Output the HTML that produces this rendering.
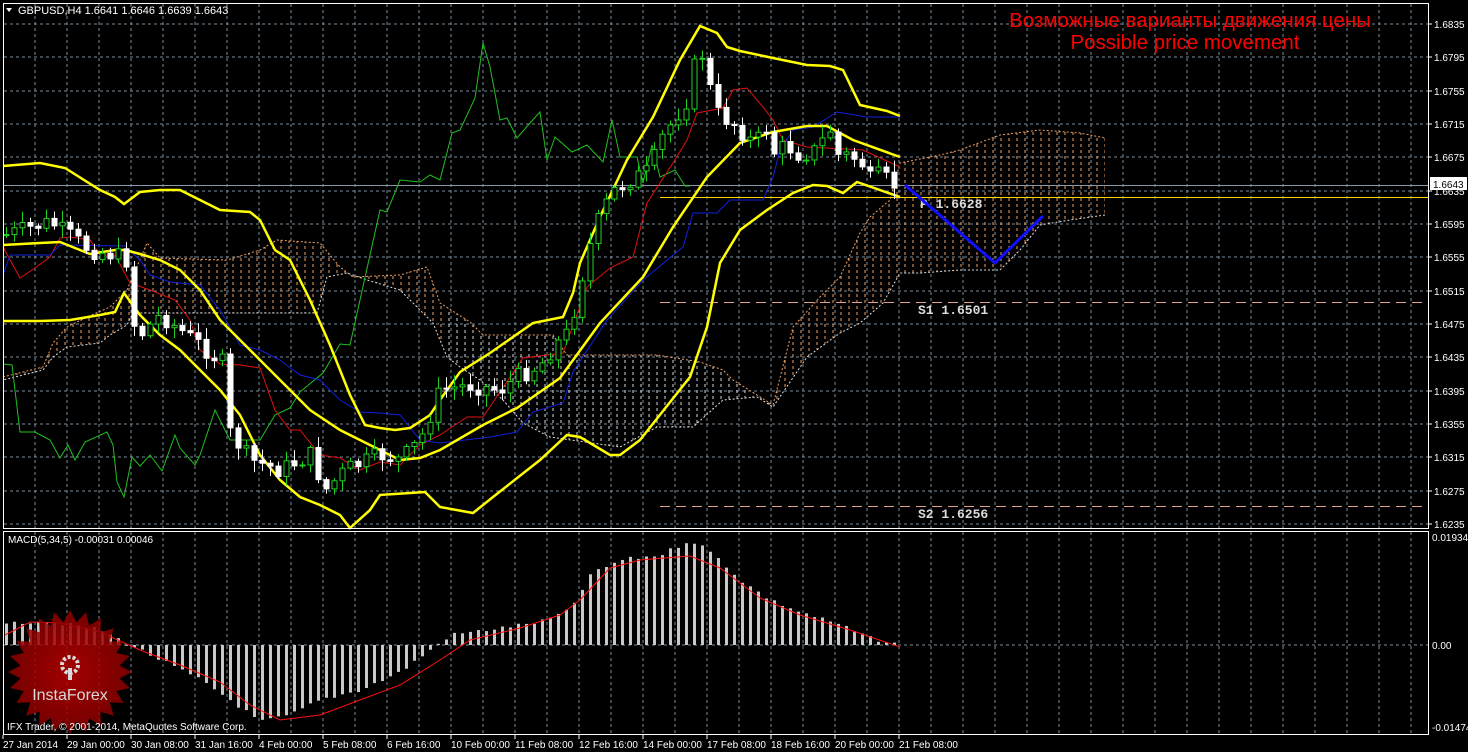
<!DOCTYPE html>
<html><head><meta charset="utf-8">
<style>
html,body{margin:0;padding:0;background:#000;overflow:hidden}
svg{display:block}
text{font-family:"Liberation Sans",Arial,sans-serif}
</style></head>
<body>
<svg id="c" width="1468" height="752" viewBox="0 0 1468 752" xmlns="http://www.w3.org/2000/svg">
<defs>
<pattern id="pw" width="8" height="6" patternUnits="userSpaceOnUse"><line x1="1" y1="0" x2="1" y2="3" stroke="#d8d8d8" stroke-width="1"/></pattern>
<pattern id="po" width="8" height="6" patternUnits="userSpaceOnUse"><line x1="1" y1="0" x2="1" y2="3" stroke="#f0a060" stroke-width="1"/></pattern>
<radialGradient id="rg" cx="50%" cy="50%" r="50%"><stop offset="0" stop-color="#c00000"/><stop offset="1" stop-color="#8a0000"/></radialGradient>
</defs>
<rect width="1468" height="752" fill="#000"/>
<g id="grid" stroke="#7a8a9a" stroke-width="1" stroke-dasharray="3,3"></g>
<g id="cloud"></g>
<g id="lines" fill="none"></g>
<g id="candles"></g>
<g id="macd"></g>
<rect x="3.5" y="3.5" width="1425" height="525" fill="none" stroke="#fff"/>
<rect x="3.5" y="531.5" width="1425" height="203" fill="none" stroke="#fff"/>
<g id="axis" fill="#fff" font-size="10"></g>
<text x="18" y="14" fill="#fff" font-size="11">GBPUSD,H4  1.6641 1.6646 1.6639 1.6643</text>
<polygon points="6,8 12,8 9,12" fill="#fff"/>
<text x="1190" y="27" fill="#ff0000" font-size="20.5" text-anchor="middle">Возможные варианты движения цены</text>
<text x="1185" y="49" fill="#ff0000" font-size="20.5" text-anchor="middle">Possible price movement</text>
<text x="8" y="543" fill="#fff" font-size="10">MACD(5,34,5) -0.00031 0.00046</text>
<g opacity="0.85">
<polygon id="star" fill="url(#rg)"/>
<circle cx="70" cy="665" r="8" fill="none" stroke="#fff" stroke-width="4" stroke-dasharray="3,2"/>
<rect x="68" y="668" width="4" height="12" fill="#fff"/>
<text x="70" y="700" fill="#fff" font-size="16" text-anchor="middle">InstaForex</text>
</g>
<text x="7" y="730" fill="#fff" font-size="10">IFX Trader, © 2001-2014, MetaQuotes Software Corp.</text>
</svg>
<script>
(function(){
var NS="http://www.w3.org/2000/svg";
function el(t,a,p){var e=document.createElementNS(NS,t);for(var k in a)e.setAttribute(k,a[k]);(p||document.getElementById('c')).appendChild(e);return e;}
function G(id){return document.getElementById(id);}
function pts(a){return a.map(function(p){return p[0]+","+p[1]}).join(" ");}
function interp(a,x){if(x<=a[0][0])return a[0][1];for(var i=0;i<a.length-1;i++){if(x>=a[i][0]&&x<=a[i+1][0]){var t=(x-a[i][0])/(a[i+1][0]-a[i][0]);return a[i][1]+t*(a[i+1][1]-a[i][1]);}}return a[a.length-1][1];}
var g=G('grid');
for(var x=35;x<1428;x+=32){el('line',{x1:x,y1:4,x2:x,y2:528},g);el('line',{x1:x,y1:532,x2:x,y2:734},g);}
for(var i=0;i<16;i++){var y=Math.round(24+i*33.33);el('line',{x1:4,y1:y,x2:1428,y2:y},g);}
el('line',{x1:4,y1:645,x2:1428,y2:645},g);
var ax=G('axis');var prices=["1.6835","1.6795","1.6755","1.6715","1.6675","1.6635","1.6595","1.6555","1.6515","1.6475","1.6435","1.6395","1.6355","1.6315","1.6275","1.6235"];
for(var i=0;i<16;i++){var y=Math.round(24+i*33.33);el('line',{x1:1428,y1:y,x2:1432,y2:y,stroke:'#fff'},ax);var t=el('text',{x:1434,y:y+4},ax);t.textContent=prices[i];}
[[541,"0.01934"],[649,"0.00"],[731,"-0.01474"]].forEach(function(a){var t=el('text',{x:1432,y:a[0]},ax);t.textContent=a[1];});
el('rect',{x:1430,y:177,width:37,height:13,fill:'#fff'},ax);
var t=el('text',{x:1433,y:188,fill:'#000'},ax);t.textContent="1.6643";
var dates=["27 Jan 2014","29 Jan 00:00","30 Jan 08:00","31 Jan 16:00","4 Feb 00:00","5 Feb 08:00","6 Feb 16:00","10 Feb 00:00","11 Feb 08:00","12 Feb 16:00","14 Feb 00:00","17 Feb 08:00","18 Feb 16:00","20 Feb 00:00","21 Feb 08:00"];
dates.forEach(function(d,i){var x=3+i*64;el('line',{x1:x,y1:735,x2:x,y2:739,stroke:'#fff'},ax);var t=el('text',{x:x,y:748},ax);t.textContent=d;});
var up=[[3,377],[43,367],[53,343],[67,327],[87,317],[110,307],[127,290],[147,243],[160,258],[227,260],[260,250],[277,240],[320,243],[340,267],[353,277],[400,275],[427,267],[440,303],[470,322],[483,335],[553,335],[567,355],[657,355],[700,362],[723,370],[733,380],[773,405],[793,327],[820,297],[840,277],[860,233],[870,217],[890,200],[900,163],[940,155],[960,150],[1000,135],[1040,130],[1080,133],[1105,138]];
var lo=[[1105,215],[1070,220],[1040,225],[1020,250],[1000,270],[960,270],[920,273],[900,273],[883,303],[860,323],[840,333],[807,357],[773,407],[757,397],[723,400],[693,427],[657,427],[620,447],[550,437],[523,423],[503,400],[480,380],[460,367],[447,357],[433,323],[413,303],[400,290],[367,280],[347,273],[327,277],[317,313],[133,313],[127,325],[110,335],[100,343],[67,347],[53,357],[43,370],[3,380]];
var cl=G('cloud');
var cp=el('clipPath',{id:'cc'},cl);el('polygon',{points:pts(up.concat(lo))},cp);
el('rect',{x:3,y:100,width:440,height:350,fill:'url(#po)','clip-path':'url(#cc)'},cl);
el('rect',{x:443,y:100,width:330,height:400,fill:'url(#pw)','clip-path':'url(#cc)'},cl);
el('rect',{x:773,y:100,width:340,height:350,fill:'url(#po)','clip-path':'url(#cc)'},cl);
el('polyline',{points:pts(up),fill:'none',stroke:'#f0a060','stroke-dasharray':'2,2'},cl);
el('polyline',{points:pts(lo),fill:'none',stroke:'#ddd','stroke-dasharray':'2,2'},cl);
var L=G('lines');
el('line',{x1:4,y1:185.5,x2:1428,y2:185.5,stroke:'#8899aa'},L);
el('line',{x1:660,y1:197.5,x2:1428,y2:197.5,stroke:'#ffd700'},L);
el('line',{x1:660,y1:302.5,x2:1422,y2:302.5,stroke:'#e0a090','stroke-dasharray':'10,6'},L);
el('line',{x1:660,y1:506.5,x2:1422,y2:506.5,stroke:'#e0a090','stroke-dasharray':'10,6'},L);
[["P  1.6628",920,208],["S1 1.6501",918,314],["S2 1.6256",918,518]].forEach(function(a){var t=el('text',{x:a[1],y:a[2],fill:'#ddd',style:'font-family:"Liberation Mono",monospace;font-size:13px;font-weight:bold'},L);t.textContent=a[0];});
el('polyline',{points:"905,185 995,263 1043,216",stroke:'#1010ff','stroke-width':3},L);
var green=[[3,364],[12,365],[20,432],[35,432],[50,440],[60,458],[68,445],[75,460],[85,442],[107,432],[113,445],[117,482],[124,497],[132,457],[140,466],[150,455],[162,471],[175,435],[180,448],[195,465],[200,455],[215,410],[230,440],[260,440],[275,415],[290,408],[300,392],[323,373],[340,344],[350,345],[360,300],[380,210],[387,212],[400,180],[420,182],[430,175],[440,180],[452,133],[460,130],[475,98],[483,43],[490,67],[500,120],[507,118],[517,138],[530,123],[540,112],[547,160],[555,137],[572,152],[587,145],[603,162],[612,120],[620,157],[637,157],[643,183],[652,145],[660,177],[675,170],[685,186],[690,186]];
el('polyline',{points:pts(green),stroke:'#20c020'},L);
var red=[[3,247],[20,278],[35,268],[50,257],[60,238],[70,237],[90,240],[100,255],[115,255],[130,283],[150,290],[175,300],[190,320],[200,350],[220,364],[240,365],[260,368],[275,410],[290,430],[300,430],[320,455],[340,458],[360,470],[380,462],[400,465],[420,445],[440,435],[467,417],[483,417],[523,358],[563,353],[587,287],[610,268],[633,257],[647,203],[673,163],[687,140],[697,113],[723,108],[733,90],[747,88],[763,107],[773,120],[783,140],[807,147],[863,150],[900,167]];
el('polyline',{points:pts(red),stroke:'#e01010'},L);
var blue=[[3,275],[10,255],[50,255],[60,245],[125,246],[140,260],[150,275],[170,282],[200,285],[220,310],[240,345],[260,350],[280,360],[300,375],[320,380],[340,400],[360,412],[380,413],[400,415],[420,440],[440,443],[490,437],[517,432],[533,412],[563,403],[573,372],[607,320],[643,280],[683,247],[693,213],[717,213],[730,200],[763,200],[773,177],[780,150],[793,130],[813,127],[837,112],[867,117],[900,117]];
el('polyline',{points:pts(blue),stroke:'#1020e0'},L);
var bu=[[3,166],[40,163],[65,168],[100,190],[115,197],[124,204],[140,192],[160,190],[180,190],[200,200],[220,210],[250,212],[260,220],[275,250],[290,260],[310,300],[330,345],[350,395],[365,425],[380,428],[395,430],[410,428],[430,415],[440,400],[460,372],[490,353],[533,323],[563,317],[573,293],[580,263],[600,217],[627,160],[653,117],[680,60],[700,26],[717,33],[727,47],[740,51],[773,58],[807,65],[830,66],[843,70],[860,105],[887,111],[900,116]];
var bm=[[3,245],[40,243],[60,242],[90,254],[115,250],[125,250],[140,254],[160,260],[180,270],[200,290],[220,320],[250,350],[280,380],[310,410],[340,430],[370,445],[400,460],[420,458],[440,450],[483,425],[517,408],[560,378],[600,323],[643,277],[673,227],[707,177],[740,143],[773,132],[807,126],[827,126],[853,140],[900,157]];
var bl=[[3,321],[40,321],[70,320],[100,315],[115,312],[124,293],[140,315],[160,335],[180,350],[200,370],[220,390],[240,415],[260,455],[280,480],[300,497],[320,505],[340,515],[350,528],[370,510],[380,495],[410,493],[425,492],[440,507],[473,513],[493,497],[540,460],[567,435],[580,437],[610,455],[620,455],[640,440],[690,377],[707,327],[720,263],[740,230],[767,210],[793,193],[813,185],[827,186],[843,193],[857,182],[900,197]];
[bu,bm,bl].forEach(function(b){el('polyline',{points:pts(b),stroke:'#ffff00','stroke-width':2.5},L);});
var path=[[5,235],[50,222],[90,250],[115,255],[130,262],[135,340],[160,315],[200,345],[225,365],[230,433],[250,460],[280,470],[310,455],[325,490],[345,470],[380,455],[400,460],[420,440],[440,390],[470,385],[500,390],[520,375],[540,365],[555,345],[570,330],[578,290],[590,245],[600,215],[612,192],[630,180],[650,170],[660,140],[680,110],[690,95],[697,45],[705,60],[712,100],[720,118],[730,120],[740,130],[755,145],[765,125],[775,155],[785,145],[800,155],[815,150],[830,130],[835,155],[845,155],[860,160],[870,180],[880,175],[893,185],[900,185]];
var s=7;function rnd(){s=(s*9301+49297)%233280;return s/233280;}
var C=G('candles');var prev=interp(path,2);
for(var x=6;x<=900;x+=8){var c=interp(path,x)+(rnd()-0.5)*18;var o=prev;var bt=Math.min(o,c),bb=Math.max(o,c);
var hi=bt-rnd()*10-2,lw=bb+rnd()*10+2;var bull=c<o;
el('line',{x1:x+0.5,y1:hi,x2:x+0.5,y2:lw,stroke:bull?'#20d020':'#ffffff'},C);
el('rect',{x:x-2,y:bt,width:5,height:Math.max(1,bb-bt),fill:bull?'#000':'#fff',stroke:bull?'#20d020':'#fff','stroke-width':1},C);prev=c;}
var mh=[[5,625],[40,620],[100,630],[130,645],[160,660],[200,680],[230,700],[260,722],[290,715],[320,700],[360,690],[400,672],[430,650],[450,635],[500,628],[540,622],[570,610],[590,575],[620,560],[660,555],[690,540],[700,545],[720,560],[740,580],[770,600],[800,612],[840,625],[870,638],[900,645]];
var M=G('macd');
for(var x=6;x<=900;x+=8){var y=interp(mh,x)+(rnd()-0.5)*4;el('rect',{x:x-1,y:Math.min(y,645),width:3,height:Math.max(1,Math.abs(645-y)),fill:'#c8c8c8'},M);}
var sig=[[5,635],[30,622],[60,623],[100,632],[140,650],[180,665],[220,682],[250,705],[280,720],[320,715],[360,700],[400,685],[440,660],[470,640],[520,628],[560,615],[580,600],[610,568],[640,560],[690,556],[720,568],[760,598],[800,615],[850,630],[900,647]];
el('polyline',{points:pts(sig),fill:'none',stroke:'#ff1010'},M);
var sp=[];for(var i=0;i<48;i++){var a=i*Math.PI/24,r=i%2?50:62;sp.push([(70+r*Math.cos(a)).toFixed(1),(672+r*Math.sin(a)).toFixed(1)]);}
G('star').setAttribute('points',pts(sp));
})();
</script>
</body></html>
